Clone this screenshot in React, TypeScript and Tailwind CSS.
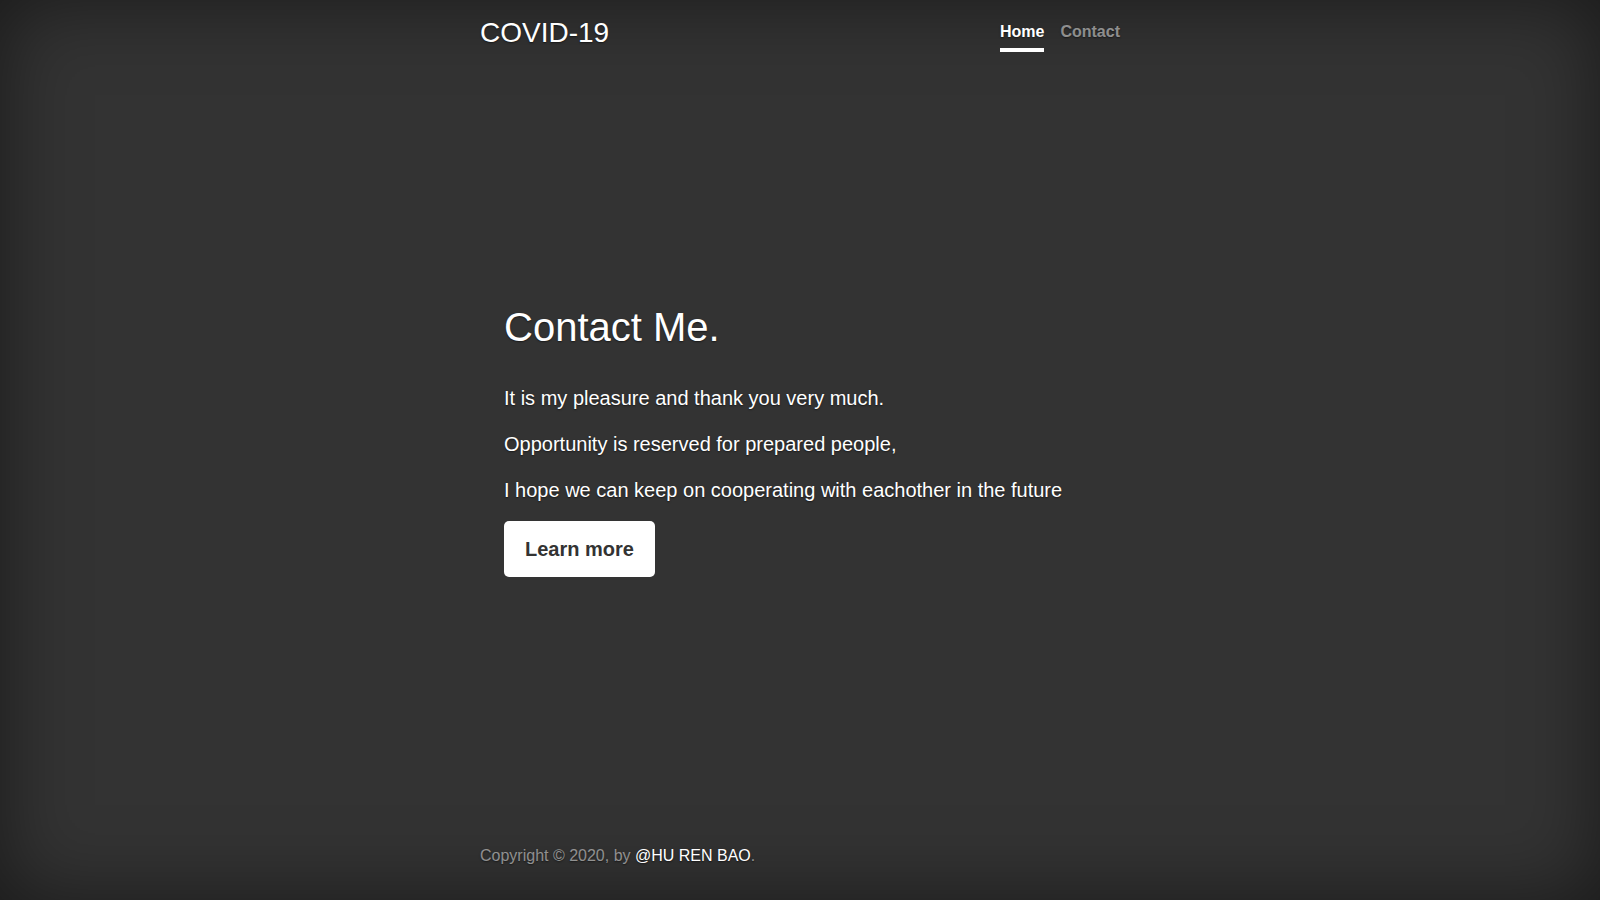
export default function App() {
	return (
		<div className="flex h-screen w-full bg-[#333] font-['Liberation_Sans',Arial,sans-serif] text-white shadow-[inset_0_0_5rem_rgba(0,0,0,0.5)] [text-shadow:0_0.05rem_0.1rem_rgba(0,0,0,0.5)]">
			<div className="mx-auto flex h-full w-full max-w-[672px] flex-col p-4">
				<header className="flex items-start justify-between">
					<h3 className="text-[28px] leading-[1.2] font-normal">COVID-19</h3>
					<nav className="flex gap-4 text-base font-bold">
						<a href="#" className="border-b-4 border-white py-1 leading-6 text-white">
							Home
						</a>
						<a href="#" className="border-b-4 border-transparent py-1 leading-6 text-white/50">
							Contact
						</a>
					</nav>
				</header>

				<main className="my-auto px-6">
					<h1 className="mb-[32px] text-[40px] leading-[48px] font-normal">Contact Me.</h1>
					<p className="mb-4 text-xl leading-[30px]">It is my pleasure and thank you very much.</p>
					<p className="mb-4 text-xl leading-[30px]">Opportunity is reserved for prepared people,</p>
					<p className="mb-4 text-xl leading-[30px]">I hope we can keep on cooperating with eachother in the future</p>
					<p className="mb-[17px]">
						<a
							href="#"
							className="inline-block rounded-[5px] bg-white px-[21px] py-[13px] text-xl leading-[30px] font-bold text-[#333] [text-shadow:none]"
						>
							Learn more
						</a>
					</p>
				</main>

				<footer className="mb-4 text-base leading-6 text-white/50">
					<p>
						Copyright © 2020, by{" "}
						<a href="#" className="text-white">
							@HU REN BAO
						</a>
						.
					</p>
				</footer>
			</div>
		</div>
	);
}
